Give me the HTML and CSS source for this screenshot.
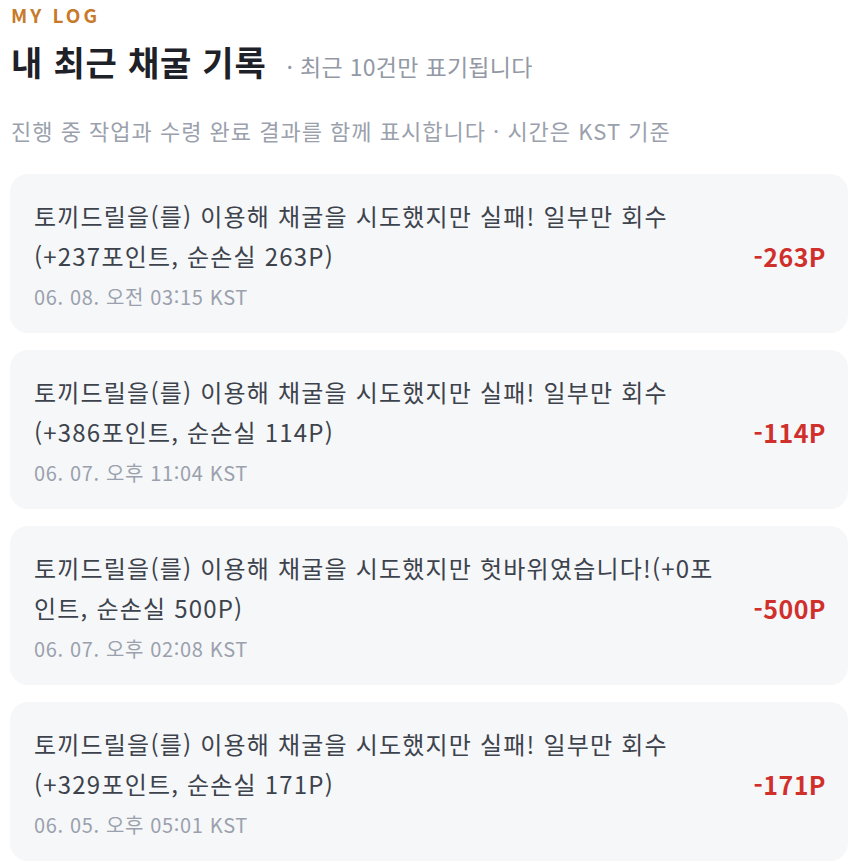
FILE: index.html
```html
<!DOCTYPE html>
<html lang="ko">
<head>
<meta charset="utf-8">
<link rel="stylesheet" href="styles.css">
</head>
<body>
<main class="page">
  <header class="head">
    <div class="eyebrow">MY LOG</div>
    <div class="title-row">
      <h1 class="title">내 최근 채굴 기록</h1>
      <span class="subtitle">· 최근 10건만 표기됩니다</span>
    </div>
    <p class="desc">진행 중 작업과 수령 완료 결과를 함께 표시합니다 · 시간은 KST 기준</p>
  </header>
  <ul class="list">
    <li class="card">
      <div class="body">
        <p class="msg">토끼드릴을(를) 이용해 채굴을 시도했지만 실패! 일부만 회수 (+237포인트, 순손실 263P)</p>
        <p class="time">06. 08. 오전 03:15 KST</p>
      </div>
      <span class="amount">-263P</span>
    </li>
    <li class="card">
      <div class="body">
        <p class="msg">토끼드릴을(를) 이용해 채굴을 시도했지만 실패! 일부만 회수 (+386포인트, 순손실 114P)</p>
        <p class="time">06. 07. 오후 11:04 KST</p>
      </div>
      <span class="amount">-114P</span>
    </li>
    <li class="card">
      <div class="body">
        <p class="msg">토끼드릴을(를) 이용해 채굴을 시도했지만 헛바위였습니다!(+0포인트, 순손실 500P)</p>
        <p class="time">06. 07. 오후 02:08 KST</p>
      </div>
      <span class="amount">-500P</span>
    </li>
    <li class="card">
      <div class="body">
        <p class="msg">토끼드릴을(를) 이용해 채굴을 시도했지만 실패! 일부만 회수 (+329포인트, 순손실 171P)</p>
        <p class="time">06. 05. 오후 05:01 KST</p>
      </div>
      <span class="amount">-171P</span>
    </li>
  </ul>
</main>
</body>
</html>
```

FILE: styles.css
```css
* { box-sizing: border-box; }
html, body { margin: 0; padding: 0; background: #ffffff; }
body {
  font-family: "Noto Sans CJK KR", "Noto Sans", sans-serif;
  color: #1f2329;
}
.page {
  padding: 0 1px 0 10px;
}
.head {
  padding-left: 1px;
}
.eyebrow {
  margin-top: 3px;
  font-size: 19px;
  line-height: 24px;
  font-weight: 700;
  letter-spacing: 3px;
  color: #c87a2b;
}
.title-row {
  margin-top: 13px;
  display: flex;
  align-items: baseline;
  gap: 20px;
}
.title {
  margin: 0;
  font-size: 34px;
  line-height: 44px;
  font-weight: 700;
  letter-spacing: 0.8px;
  color: #1e2127;
}
.subtitle {
  font-size: 23px;
  letter-spacing: 0.3px;
  color: #9299a5;
}
.desc {
  margin: 31px 0 0;
  font-size: 22px;
  line-height: 30px;
  letter-spacing: 1px;
  color: #9aa1ac;
}
.list {
  list-style: none;
  margin: 29px 0 0;
  padding: 0;
  display: flex;
  flex-direction: column;
  gap: 17px;
}
.card {
  display: flex;
  align-items: center;
  gap: 26px;
  padding: 22px 22px 22px 24px;
  background: #f6f7f9;
  border-radius: 18px;
}
.body {
  flex: 1;
  min-width: 0;
}
.msg {
  margin: 0;
  font-size: 24px;
  line-height: 40px;
  letter-spacing: 1.2px;
  color: #3d434c;
}
.time {
  margin: 7px 0 0;
  font-size: 20px;
  line-height: 28px;
  letter-spacing: 0.65px;
  color: #9aa1ad;
}
.amount {
  flex: none;
  margin-top: 4px;
  font-size: 25px;
  font-weight: 700;
  letter-spacing: 0.45px;
  color: #d0302c;
}
```
